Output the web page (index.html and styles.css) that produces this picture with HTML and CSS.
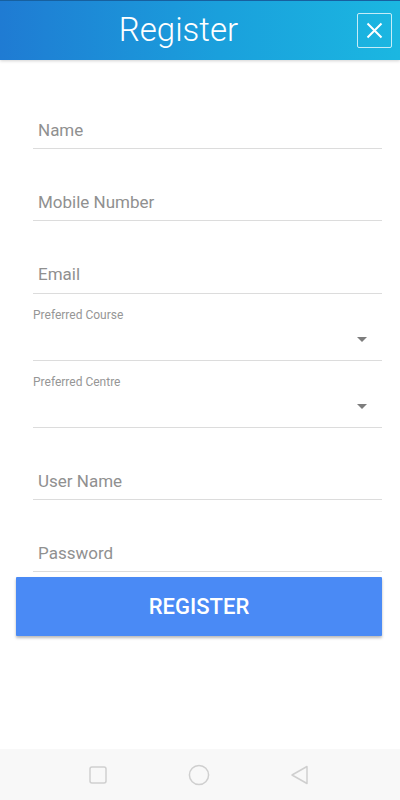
FILE: index.html
```html
<!DOCTYPE html>
<html>
<head>
<meta charset="utf-8">
<link rel="stylesheet" href="styles.css">
</head>
<body>
<div class="screen">
  <header class="topbar">
    <div class="title">Register</div>
    <div class="close">
      <svg width="17" height="17" viewBox="0 0 17 17"><path d="M1.5 1.5 L15.5 15.5 M15.5 1.5 L1.5 15.5" stroke="#fff" stroke-width="2" fill="none"/></svg>
    </div>
  </header>
  <main class="form">
    <div class="field"><span class="ph">Name</span></div>
    <div class="field"><span class="ph">Mobile Number</span></div>
    <div class="field field-tall"><span class="ph">Email</span></div>
    <div class="select">
      <span class="label">Preferred Course</span>
      <div class="arrow-row"><span class="arrow"></span></div>
    </div>
    <div class="select">
      <span class="label">Preferred Centre</span>
      <div class="arrow-row"><span class="arrow"></span></div>
    </div>
    <div class="field"><span class="ph">User Name</span></div>
    <div class="field"><span class="ph">Password</span></div>
  </main>
  <div class="btn-wrap"><button class="btn">REGISTER</button></div>
  <div class="spacer"></div>
  <nav class="navbar">
    <svg width="18" height="18" viewBox="0 0 18 18"><rect x="1" y="1" width="16" height="16" rx="2" fill="none" stroke="#cfcfcf" stroke-width="1.5"/></svg>
    <svg width="22" height="22" viewBox="0 0 22 22"><circle cx="11" cy="11" r="9.6" fill="none" stroke="#cfcfcf" stroke-width="1.5"/></svg>
    <svg width="19" height="20" viewBox="0 0 19 20"><path d="M17 1.5 L17 18.5 L2 10 Z" fill="none" stroke="#cfcfcf" stroke-width="1.5" stroke-linejoin="round"/></svg>
  </nav>
</div>
</body>
</html>
```
FILE: styles.css
```css
* { box-sizing: border-box; }
html, body { margin: 0; padding: 0; }
body { font-family: Roboto, "Noto Sans", sans-serif; background: #fff; }
.screen { width: 400px; height: 800px; display: flex; flex-direction: column; overflow: hidden; }
.topbar {
  height: 60px;
  flex: none;
  display: flex;
  align-items: center;
  padding-right: 8px;
  background: linear-gradient(90deg, #1f7bd3 0%, #1aa0dc 55%, #1bb7e1 100%);
  border-top: 1px solid #17609f;
  box-shadow: 0 1px 3px rgba(0,0,0,0.18);
  position: relative;
  z-index: 1;
}
.title {
  flex: 1;
  text-align: center;
  color: #fff;
  font-weight: 300;
  font-size: 33px;
  line-height: 36px;
  padding-bottom: 2px;
}
.close {
  width: 35px;
  height: 35px;
  border: 1.5px solid rgba(255,255,255,0.75);
  border-radius: 2px;
  display: flex;
  align-items: center;
  justify-content: center;
}
.form { padding: 17px 18px 0 33px; display: flex; flex-direction: column; }
.field {
  height: 72px;
  border-bottom: 1px solid #dcdcdc;
  display: flex;
  align-items: flex-end;
  padding: 0 0 8px 5px;
}
.field-tall { height: 73px; padding-bottom: 9px; }
.ph { font-size: 17px; line-height: 20px; color: #909090; }
.select {
  height: 67px;
  border-bottom: 1px solid #dcdcdc;
  padding-top: 13px;
  display: flex;
  flex-direction: column;
}
.label { font-size: 12px; line-height: 16px; color: #969696; }
.arrow-row { display: flex; justify-content: flex-end; padding: 14px 15px 0 0; }
.arrow {
  width: 0; height: 0;
  border-left: 5.5px solid transparent;
  border-right: 5.5px solid transparent;
  border-top: 5.5px solid #7d7d7d;
}
.btn-wrap { padding: 5px 18px 0 16px; }
.btn {
  width: 100%;
  height: 59px;
  border: none;
  border-radius: 1px;
  background: #4a8af5;
  color: #fff;
  font-family: Roboto, "Noto Sans", sans-serif;
  font-weight: 500;
  font-size: 22px;
  box-shadow: 0 2px 3px rgba(0,0,0,0.28);
}
.spacer { flex: 1; }
.navbar {
  height: 51px;
  flex: none;
  background: #f8f8f8;
  display: flex;
  align-items: center;
  justify-content: space-between;
  padding: 0 91px 0 89px;
}
```
